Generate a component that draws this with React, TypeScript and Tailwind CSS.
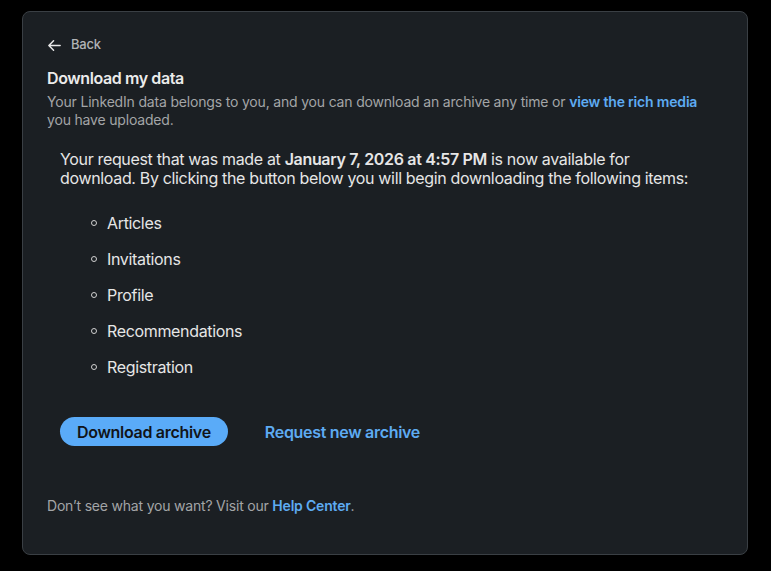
import React from "react";

export default function App() {
  const items = ["Articles", "Invitations", "Profile", "Recommendations", "Registration"];
  return (
    <div
      className="w-[771px] h-[571px] bg-black pt-[11px] pl-[22px]"
      style={{ fontFamily: "Inter, 'Noto Sans', sans-serif" }}
    >
      <div className="w-[726px] h-[544px] bg-[#1b1f23] border border-[#3a3f44] rounded-[8px] pl-[24px] pr-[24px] pt-[24px]">
        <div className="flex items-center gap-[9px] h-[18px] text-[13px] text-[#b0b3b6] font-medium tracking-[-0.2px]">
          <svg width="15" height="15" viewBox="0 0 16 16" fill="none" stroke="#e8e8e8" strokeWidth="1.6" strokeLinecap="round" strokeLinejoin="round">
            <path d="M14 8H2.5M7 3L2 8l5 5" />
          </svg>
          <span>Back</span>
        </div>
        <h1 className="mt-[14px] text-[16px] leading-[20px] font-semibold text-[#ebebeb] tracking-[-0.4px]">Download my data</h1>
        <p className="mt-[5px] text-[14px] leading-[18px] text-[#a3a5a7] tracking-[-0.18px]">
          Your LinkedIn data belongs to you, and you can download an archive any time or{" "}
          <span className="font-semibold text-[#5eabf2]">view the rich media</span>
          <br />
          you have uploaded.
        </p>
        <div className="pl-[13px] pr-[12px]">
          <p className="mt-[21px] text-[16px] leading-[19px] text-[#e6e6e6] tracking-[-0.34px]">
            Your request that was made at <span className="font-semibold">January 7, 2026 at 4:57 PM</span> is now available for
            <br />
            download. By clicking the button below you will begin downloading the following items:
          </p>
          <ul className="mt-[25px] pl-[31px] flex flex-col gap-[16px]">
            {items.map((it) => (
              <li key={it} className="flex items-center h-[20px] text-[16px] text-[#e6e6e6] tracking-[-0.34px]">
                <span className="w-[6px] h-[6px] rounded-full border border-[#d0d0d0] mr-[10px]" />
                {it}
              </li>
            ))}
          </ul>
          <div className="mt-[40px] flex items-center gap-[37px]">
            <button className="h-[29px] px-[17px] rounded-full bg-[#5aabf8] text-[16px] font-semibold text-[#111418] tracking-[-0.3px]">
              Download archive
            </button>
            <span className="text-[16px] font-semibold text-[#5eabf2] tracking-[-0.3px]">Request new archive</span>
          </div>
        </div>
        <p className="mt-[49px] text-[14px] text-[#a3a5a7] tracking-[-0.2px]">
          Don’t see what you want? Visit our <span className="font-semibold text-[#5eabf2]">Help Center</span>.
        </p>
      </div>
    </div>
  );
}
